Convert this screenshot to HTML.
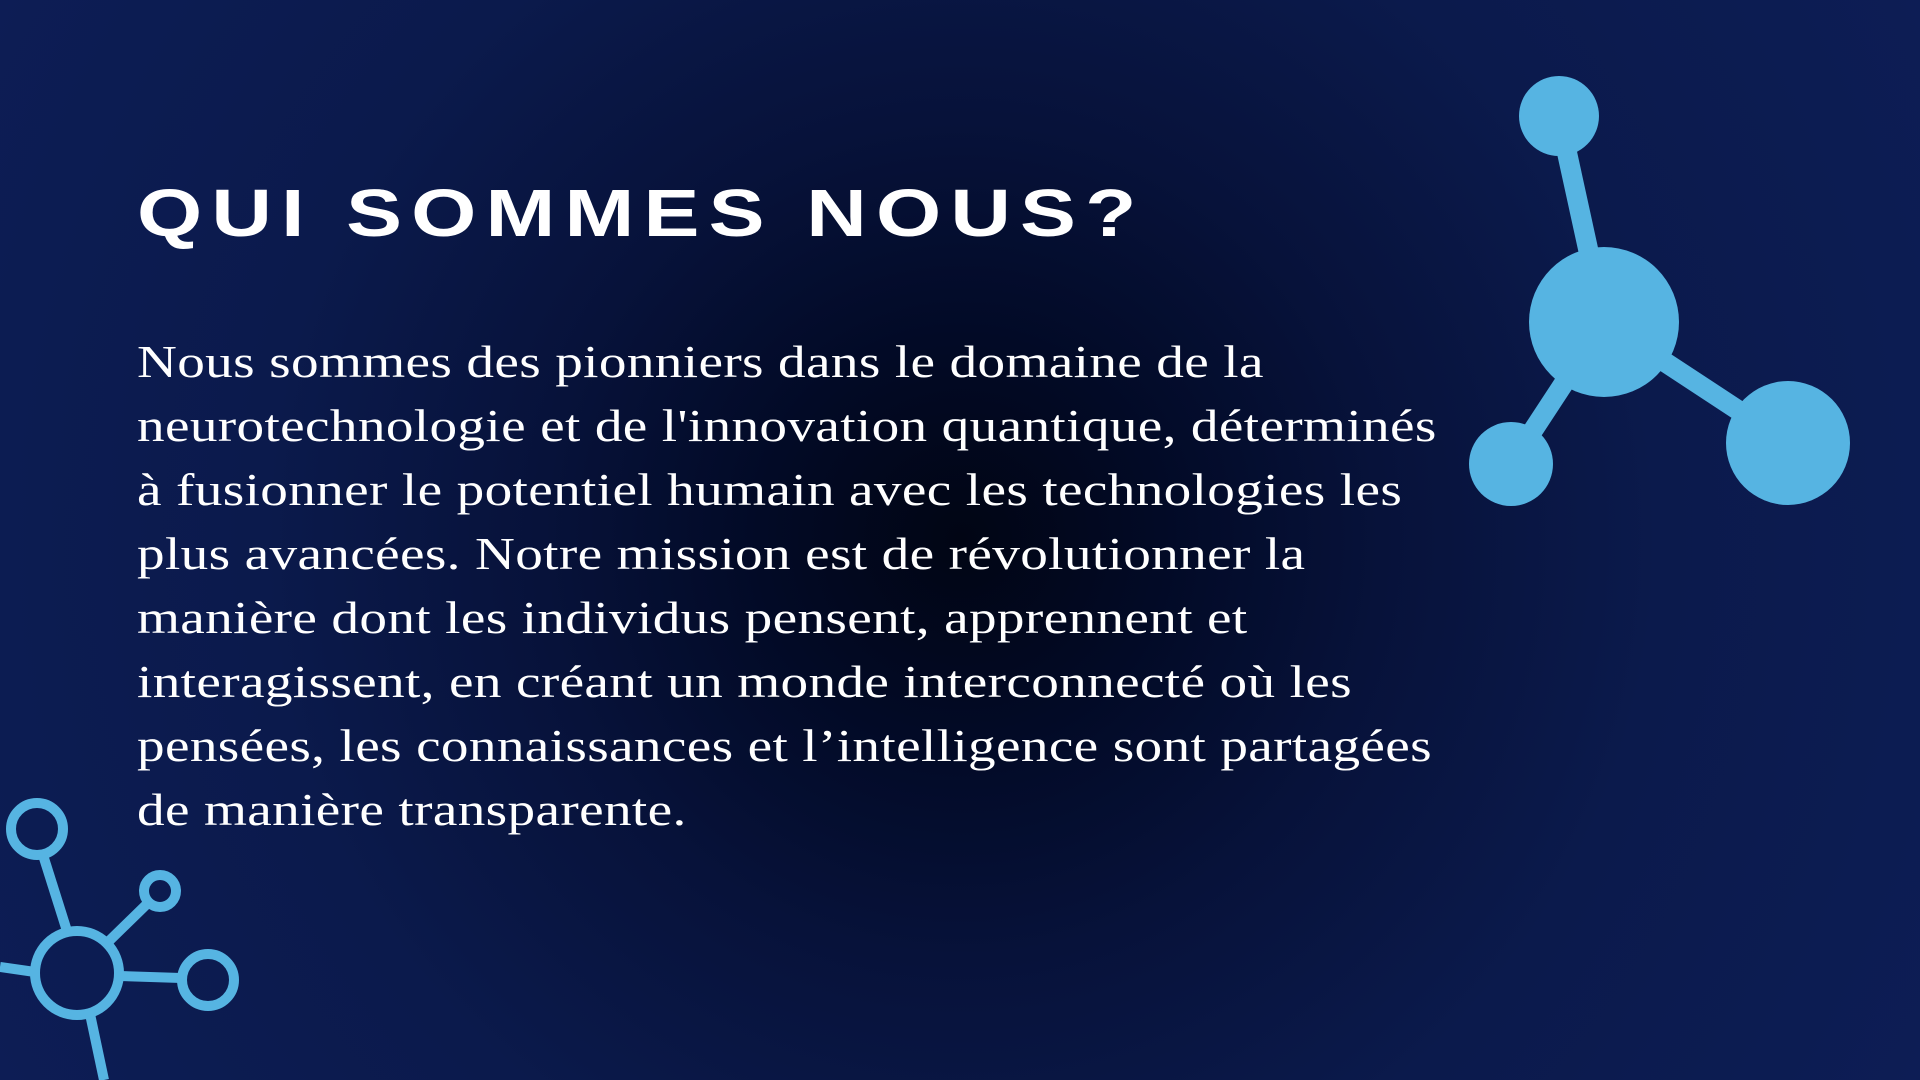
<!DOCTYPE html>
<html><head><meta charset="utf-8"><style>
html,body{margin:0;padding:0}
body{width:1920px;height:1080px;overflow:hidden;position:relative;
background:radial-gradient(circle at 961px 539px,#010514 0px,#020a26 200px,#07123a 420px,#0b1a4c 700px,#0d1d55 1100px);
font-family:"Liberation Serif",serif;color:#fff}
h1{position:absolute;left:137px;top:180px;margin:0;font-family:"Liberation Sans",sans-serif;font-weight:bold;font-size:82px;letter-spacing:9px;line-height:1;transform:scale(1.022,0.82);transform-origin:top left}
.p{position:absolute;left:137px;top:330px;font-size:46px;line-height:64px;white-space:nowrap;letter-spacing:0.3px;transform:scaleX(1.2);transform-origin:top left}
svg{position:absolute;left:0;top:0}
</style></head><body>
<svg width="1920" height="1080">
<g stroke="#56b4e2" stroke-width="20" fill="#56b4e2">
<line x1="1559" y1="116" x2="1604" y2="322"/>
<line x1="1604" y1="322" x2="1788" y2="443"/>
<line x1="1604" y1="322" x2="1511" y2="464"/>
<circle cx="1559" cy="116" r="40" stroke="none"/>
<circle cx="1604" cy="322" r="75" stroke="none"/>
<circle cx="1788" cy="443" r="62" stroke="none"/>
<circle cx="1511" cy="464" r="42" stroke="none"/>
</g>
<g stroke="#56b4e2" stroke-width="10" fill="none">
<line x1="43" y1="855" x2="67" y2="931"/>
<line x1="107" y1="943" x2="148" y2="903"/>
<line x1="120" y1="976" x2="181" y2="978"/>
<line x1="0" y1="967" x2="35" y2="972"/>
<line x1="90" y1="1014" x2="104" y2="1080"/>
<circle cx="37" cy="829" r="26"/>
<circle cx="77" cy="973" r="42"/>
<circle cx="160" cy="891" r="16"/>
<circle cx="208" cy="980" r="26"/>
</g>
</svg>
<h1>QUI SOMMES NOUS?</h1>
<div class="p">Nous sommes des pionniers dans le domaine de la<br>neurotechnologie et de l'innovation quantique, déterminés<br>à fusionner le potentiel humain avec les technologies les<br>plus avancées. Notre mission est de révolutionner la<br>manière dont les individus pensent, apprennent et<br>interagissent, en créant un monde interconnecté où les<br>pensées, les connaissances et l’intelligence sont partagées<br>de manière transparente.</div>
</body></html>
